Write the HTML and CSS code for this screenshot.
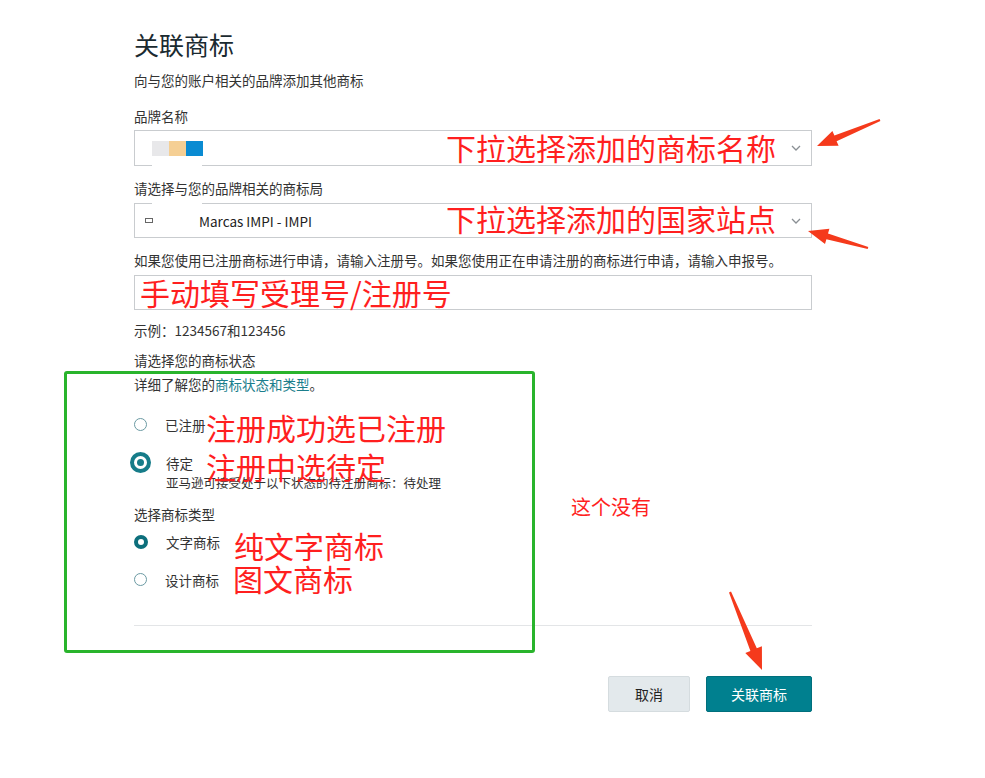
FILE: index.html
```html
<!DOCTYPE html>
<html lang="zh-CN">
<head>
    <meta charset="UTF-8">
    <title>关联商标</title>
    <link rel="stylesheet" href="styles.css">
</head>
<body>

<div class="page">
    <h1 class="title">关联商标</h1>
    <p class="subtitle">向与您的账户相关的品牌添加其他商标</p>

    <div class="field-label first">品牌名称</div>
    <div class="select brand">
        <span class="logo">
            <i class="sq gray"></i><i class="sq beige"></i><i class="sq blue"></i>
        </span>
        <svg class="chevron" width="10" height="6" viewBox="0 0 10 6"><polyline points="1,1 5,5 9,1" fill="none" stroke="#8a8f94" stroke-width="1.3"/></svg>
    </div>

    <div class="field-label">请选择与您的品牌相关的商标局</div>
    <div class="select second">
        <span class="flag"></span>
        <span class="office">Marcas IMPI - IMPI</span>
        <svg class="chevron" width="10" height="6" viewBox="0 0 10 6"><polyline points="1,1 5,5 9,1" fill="none" stroke="#8a8f94" stroke-width="1.3"/></svg>
    </div>

    <div class="field-label">如果您使用已注册商标进行申请，请输入注册号。如果您使用正在申请注册的商标进行申请，请输入申报号。</div>
    <div class="input"></div>
    <div class="hint">示例：1234567和123456</div>

    <div class="field-label status">请选择您的商标状态</div>
    <div class="learn">详细了解您的<a href="#">商标状态和类型</a>。</div>

    <div class="radio-row first-radio">
        <span class="radio"></span>
        <span class="radio-text">已注册</span>
    </div>
    <div class="radio-row pending">
        <span class="radio big"></span>
        <div>
            <div class="radio-text">待定</div>
            <div class="radio-note">亚马逊可接受处于以下状态的待注册商标：待处理</div>
        </div>
    </div>

    <div class="field-label type">选择商标类型</div>
    <div class="radio-row type-first">
        <span class="radio checked"></span>
        <span class="radio-text">文字商标</span>
    </div>
    <div class="radio-row type-second">
        <span class="radio"></span>
        <span class="radio-text">设计商标</span>
    </div>

    <hr class="divider">

    <div class="actions">
        <button class="btn cancel">取消</button>
        <button class="btn primary">关联商标</button>
    </div>
</div>

<!-- annotations drawn over the screenshot -->
<div class="green-box"></div>
<div class="note n1">下拉选择添加的商标名称</div>
<div class="note n2">下拉选择添加的国家站点</div>
<div class="note n3">手动填写受理号/注册号</div>
<div class="note n4">注册成功选已注册</div>
<div class="note n5">注册中选待定</div>
<div class="note n6">纯文字商标</div>
<div class="note n7">图文商标</div>
<div class="note small n8">这个没有</div>

<svg class="arrows" width="985" height="778" viewBox="0 0 985 778">
    <polygon fill="#f53a1c" points="817,146 838.6,145.8 836.6,141.2 880.4,120.9 879.6,119.1 834.4,135.6 832.4,131"/>
    <polygon fill="#f53a1c" points="808,231 829.4,228.7 828,233.5 868.3,247 867.7,249 826.4,239.3 825,244.1"/>
    <polygon fill="#f53a1c" points="762,670 761.9,646.2 756.8,648.3 731,591.6 729,592.4 750.4,650.9 745.3,653"/>
</svg>

</body>
</html>
```

FILE: styles.css
```css
body {
    margin: 0;
    background-color: #fff;
    font-family: "Noto Sans CJK SC", "Noto Sans", sans-serif;
    color: #333;
    font-size: 13.5px;
    line-height: 20px;
}
.page {
    width: 678px;
    padding: 28px 0 0 134px;
}
.title {
    margin: 0;
    font-size: 25px;
    line-height: 32px;
    font-weight: 400;
    color: #1a2a30;
}
.subtitle {
    margin: 10px 0 0;
}
.field-label {
    margin-top: 12px;
    white-space: nowrap;
}
.field-label.first {
    margin-top: 16px;
}
.select {
    margin-top: 4px;
    height: 34px;
    border: 1px solid #c9cccf;
    display: flex;
    align-items: center;
    position: relative;
}
.select.brand::after {
    content: "";
    position: absolute;
    left: 17px;
    bottom: -1px;
    width: 50px;
    height: 1px;
    background-color: #fff;
}
.select.second {
    margin-top: 5px;
    height: 33px;
}
.select.second::after {
    content: "";
    position: absolute;
    left: 17px;
    top: -1px;
    width: 50px;
    height: 1px;
    background-color: #fff;
}
.select .chevron {
    margin-left: auto;
    margin-right: 10px;
}
.logo {
    display: flex;
    margin-left: 17px;
}
.logo .sq {
    width: 17px;
    height: 15px;
}
.sq.gray { background-color: #e8e8ea; }
.sq.beige { background-color: #f5cf94; }
.sq.blue { background-color: #0a8bd2; }
.flag {
    width: 6px;
    height: 3px;
    border: 1px solid #666;
    margin-left: 10px;
}
.office {
    margin-left: 46px;
    color: #222;
}
.input {
    margin-top: 5px;
    height: 33px;
    border: 1px solid #c9cccf;
}
.hint {
    margin-top: 10px;
}
.field-label.status {
    margin-top: 10px;
}
.learn {
    margin-top: 4px;
}
.learn a {
    color: #1b7e8c;
    text-decoration: none;
}
.radio-row {
    display: flex;
    align-items: flex-start;
}
.radio-row.first-radio { margin-top: 21px; }
.radio-row.pending { margin-top: 18px; }
.radio-row.type-first { margin-top: 8px; }
.radio-row.type-second { margin-top: 18px; }
.field-label.type { margin-top: 11px; }
.radio {
    width: 11px;
    height: 11px;
    border: 1.5px solid #6b9aa3;
    border-radius: 50%;
    margin: 3px 18px 0 0;
    flex-shrink: 0;
}
.radio.checked {
    border: 4px solid #0d6f7c;
    width: 6px;
    height: 6px;
}
.radio.big {
    width: 7px;
    height: 7px;
    padding: 3px;
    border: 4px solid #167c89;
    background-color: #167c89;
    background-clip: content-box;
    margin: -1px 15px 0 -4px;
}
.radio-text {
    color: #333;
}
.radio-note {
    font-size: 12.5px;
}
.divider {
    margin: 35px 0 0;
    border: none;
    border-top: 1px solid #e3e5e7;
}
.actions {
    margin-top: 50px;
    display: flex;
    justify-content: flex-end;
    gap: 16px;
}
.btn {
    height: 36px;
    border-radius: 2px;
    font-family: "Noto Sans CJK SC", sans-serif;
    font-size: 14px;
    cursor: pointer;
}
.btn.cancel {
    width: 82px;
    background-color: #e3e9ec;
    border: 1px solid #d5dcdf;
    color: #222;
}
.btn.primary {
    width: 106px;
    background-color: #00808f;
    border: 1px solid #006f7c;
    color: #fff;
}
.green-box {
    position: absolute;
    left: 64px;
    top: 371px;
    width: 465px;
    height: 276px;
    border: 3px solid #29b42c;
    border-radius: 3px;
}
.note {
    position: absolute;
    color: #ff1f1f;
    font-size: 30px;
    line-height: 30px;
    white-space: nowrap;
}
.note.small {
    font-size: 20px;
    line-height: 20px;
}
.n1 { left: 446px; top: 132px; }
.n2 { left: 446px; top: 203px; }
.n3 { left: 140px; top: 277px; }
.n4 { left: 206px; top: 412px; }
.n5 { left: 206px; top: 451px; }
.n6 { left: 234px; top: 530px; }
.n7 { left: 233px; top: 563px; }
.n8 { left: 571px; top: 497px; }
.arrows {
    position: absolute;
    left: 0;
    top: 0;
    pointer-events: none;
}
```
